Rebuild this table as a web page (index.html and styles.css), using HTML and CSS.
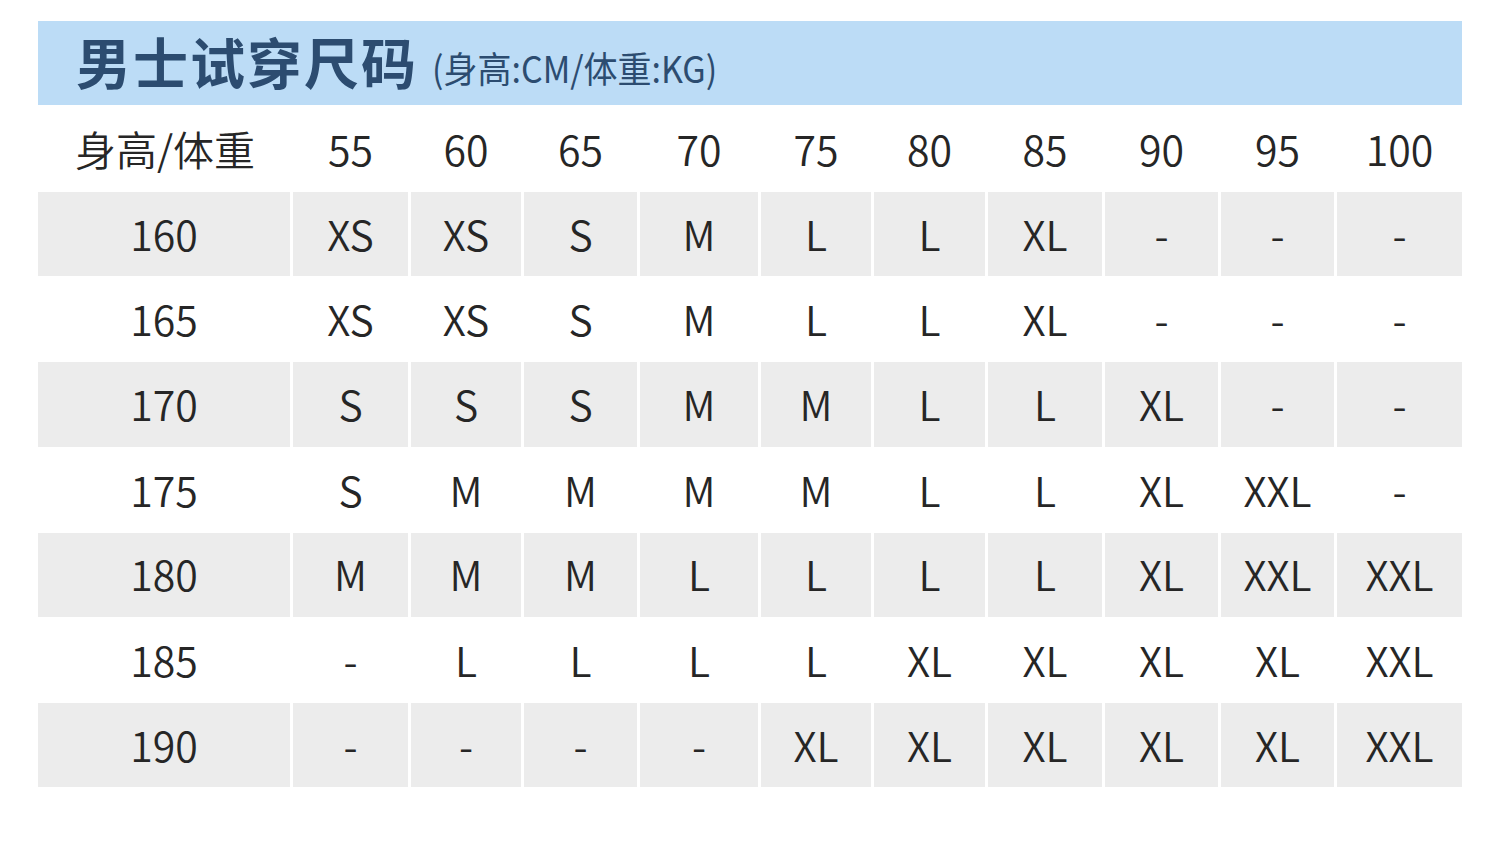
FILE: index.html
```html
<!DOCTYPE html>
<html lang="zh-CN">
<head>
<meta charset="utf-8">
<title>男士试穿尺码</title>
<link rel="stylesheet" href="styles.css">
</head>
<body>
<div class="chart">
  <div class="banner">
    <span class="title">男士试穿尺码</span>
    <span class="unit">(身高:CM/体重:KG)</span>
  </div>
  <div class="grid">
    <div class="hd first">身高/体重</div>
    <div class="hd">55</div><div class="hd">60</div><div class="hd">65</div><div class="hd">70</div><div class="hd">75</div><div class="hd">80</div><div class="hd">85</div><div class="hd">90</div><div class="hd">95</div><div class="hd">100</div>

    <div class="c g">160</div><div class="c g">XS</div><div class="c g">XS</div><div class="c g">S</div><div class="c g">M</div><div class="c g">L</div><div class="c g">L</div><div class="c g">XL</div><div class="c g">-</div><div class="c g">-</div><div class="c g">-</div>

    <div class="c">165</div><div class="c">XS</div><div class="c">XS</div><div class="c">S</div><div class="c">M</div><div class="c">L</div><div class="c">L</div><div class="c">XL</div><div class="c">-</div><div class="c">-</div><div class="c">-</div>

    <div class="c g">170</div><div class="c g">S</div><div class="c g">S</div><div class="c g">S</div><div class="c g">M</div><div class="c g">M</div><div class="c g">L</div><div class="c g">L</div><div class="c g">XL</div><div class="c g">-</div><div class="c g">-</div>

    <div class="c">175</div><div class="c">S</div><div class="c">M</div><div class="c">M</div><div class="c">M</div><div class="c">M</div><div class="c">L</div><div class="c">L</div><div class="c">XL</div><div class="c">XXL</div><div class="c">-</div>

    <div class="c g">180</div><div class="c g">M</div><div class="c g">M</div><div class="c g">M</div><div class="c g">L</div><div class="c g">L</div><div class="c g">L</div><div class="c g">L</div><div class="c g">XL</div><div class="c g">XXL</div><div class="c g">XXL</div>

    <div class="c">185</div><div class="c">-</div><div class="c">L</div><div class="c">L</div><div class="c">L</div><div class="c">L</div><div class="c">XL</div><div class="c">XL</div><div class="c">XL</div><div class="c">XL</div><div class="c">XXL</div>

    <div class="c g">190</div><div class="c g">-</div><div class="c g">-</div><div class="c g">-</div><div class="c g">-</div><div class="c g">XL</div><div class="c g">XL</div><div class="c g">XL</div><div class="c g">XL</div><div class="c g">XL</div><div class="c g">XXL</div>
  </div>
</div>
</body>
</html>
```

FILE: styles.css
```css
html, body {
  margin: 0;
  padding: 0;
  background: #ffffff;
}

body {
  font-family: "Noto Sans CJK SC", "Noto Sans", sans-serif;
  color: #262626;
}

.chart {
  width: 1424px;
  margin: 21px 0 0 38px;
}

.banner {
  height: 84px;
  background: #bcdcf6;
  display: flex;
  align-items: center;
  padding-left: 38px;
  color: #2c4c70;
}

.title {
  font-size: 55px;
  font-weight: 700;
  letter-spacing: 2px;
  line-height: 1;
  margin-top: -6px;
}

.unit {
  font-size: 34px;
  font-weight: 400;
  margin-left: 14px;
  margin-top: 10px;
  line-height: 1;
  transform: scaleY(1.08);
}

.grid {
  display: grid;
  grid-template-columns: 252px 115px 110px 113px 118px 110px 111px 114px 113px 113px 125px;
  grid-template-rows: 87px;
  grid-auto-rows: 85.2px;
  column-gap: 3px;
}

.hd,
.c {
  display: flex;
  align-items: center;
  justify-content: center;
  font-size: 41px;
  font-weight: 350;
  line-height: 1;
}

.hd {
  padding-top: 0;
}

.hd.first {
  justify-content: flex-start;
  padding-left: 37px;
}

.c {
  padding-bottom: 2px;
}

.g {
  background: #ececec;
  margin-bottom: 1px;
}
```
